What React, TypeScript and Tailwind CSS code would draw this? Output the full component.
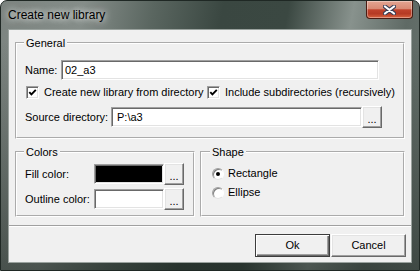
import React from 'react';

const sunken =
  'border border-t-[#a0a0a0] border-l-[#a0a0a0] border-r-white border-b-white shadow-[inset_1px_1px_0_#696969,inset_-1px_-1px_0_#e3e3e3]';
const raised =
  'border border-t-white border-l-white border-r-[#696969] border-b-[#696969] shadow-[inset_-1px_-1px_0_#a0a0a0,inset_1px_1px_0_#e3e3e3]';
const group = 'm-0 p-0 border-2 [border-style:groove] border-white';

const Checkbox = () => (
  <span className={`w-[13px] h-[13px] bg-white flex items-center justify-center ${sunken}`}>
    <svg width="9" height="9" viewBox="0 0 9 9">
      <path d="M1.3 4.2 L3.4 6.4 L7.8 1.8" stroke="#000" strokeWidth="1.9" fill="none" />
    </svg>
  </span>
);

const Radio = ({ on }: { on?: boolean }) => (
  <span className="w-[12px] h-[12px] rounded-full bg-white border border-t-[#a0a0a0] border-l-[#a0a0a0] border-r-white border-b-[#e3e3e3] shadow-[inset_1px_1px_0_#808080] flex items-center justify-center">
    {on && <span className="w-[4px] h-[4px] rounded-full bg-black" />}
  </span>
);

const Dots = ({ h = 'h-[22px]' }: { h?: string }) => (
  <button className={`w-[20px] ${h} bg-[#f0f0f0] ${raised} flex items-end justify-center pb-[4px] leading-[8px]`}>
    ...
  </button>
);

export default function App() {
  return (
    <div className="w-[420px] h-[271px] flex flex-col rounded-t-[7px] border border-[#1f2824] px-[7px] pb-[7px] font-['Liberation_Sans',Arial,sans-serif] text-[11px] leading-[13px] text-black bg-[linear-gradient(180deg,rgba(0,0,0,0)_0px,rgba(0,0,0,0)_40px,rgba(25,35,30,0.55)_100%),linear-gradient(100deg,#7c8480_0%,#858d89_18%,#5a6660_33%,#3a4741_48%,#3b4842_62%,#88928d_76%,#5f6a65_88%,#6e7873_100%)]">
      <div className="h-[28px] flex items-start justify-between -mx-[7px] pl-[7px] pr-[6px]">
        <span className="mt-[7px] text-[12px] leading-[15px] [text-shadow:0_0_6px_rgba(255,255,255,0.9),0_0_10px_rgba(255,255,255,0.6)]">
          Create new library
        </span>
        <div className="w-[47px] h-[18px] rounded-b-[4px] border border-t-0 border-[#4a1c12] shadow-[inset_0_0_0_1px_rgba(255,255,255,0.35)] bg-[linear-gradient(180deg,#e3a592_0%,#d88a74_45%,#c0432c_52%,#b53a24_75%,#d8643f_100%)] flex items-center justify-center">
          <svg width="13" height="10" viewBox="0 0 13 10">
            <path d="M2 1.5 L11 8.5 M11 1.5 L2 8.5" stroke="#3b3f55" strokeWidth="4.2" strokeLinecap="round" />
            <path d="M2 1.5 L11 8.5 M11 1.5 L2 8.5" stroke="#fff" strokeWidth="2.2" strokeLinecap="round" />
          </svg>
        </div>
      </div>

      <div className="h-[234px] bg-[#f0f0f0] border border-[#9aa29e] flex flex-col">
        <div className="pl-[6px] pr-[6px] pt-[7px]">
          <fieldset className={`h-[102px] ${group}`}>
            <legend className="ml-[7px] px-[2px] leading-[12px]">General</legend>
            <div className="pl-[8px]">
              <div className="mt-[11px] h-[20px] flex items-center">
                <span className="w-[36px]">Name:</span>
                <div className={`w-[318px] h-[20px] bg-white pl-[3px] flex items-center ${sunken}`}>02_a3</div>
              </div>
              <div className="mt-[6px] h-[13px] flex items-center">
                <div className="w-[181px] ml-[1px] flex items-center gap-[5px]">
                  <Checkbox />
                  <span>Create new library from directory</span>
                </div>
                <div className="flex items-center gap-[5px]">
                  <Checkbox />
                  <span>Include subdirectories (recursively)</span>
                </div>
              </div>
              <div className="mt-[7px] h-[22px] flex items-center">
                <span className="w-[86px]">Source directory:</span>
                <div className={`w-[251px] h-[20px] bg-white pl-[5px] flex items-center ${sunken}`}>P:\a3</div>
                <Dots />
              </div>
            </div>
          </fieldset>

          <div className="mt-[7px] flex gap-[5px]">
            <fieldset className={`w-[180px] h-[71px] ${group}`}>
              <legend className="ml-[7px] px-[2px] leading-[12px]">Colors</legend>
              <div className="pl-[8px]">
                <div className="mt-[5px] h-[22px] flex items-center">
                  <span className="w-[69px]">Fill color:</span>
                  <div className={`w-[70px] h-[20px] bg-black ${sunken}`} />
                  <Dots />
                </div>
                <div className="mt-[3px] h-[22px] flex items-center">
                  <span className="w-[69px]">Outline color:</span>
                  <div className={`w-[70px] h-[20px] bg-white ${sunken}`} />
                  <Dots />
                </div>
              </div>
            </fieldset>
            <fieldset className={`w-[205px] h-[71px] ${group}`}>
              <legend className="ml-[8px] px-[2px] leading-[12px]">Shape</legend>
              <div className="pl-[10px]">
                <div className="mt-[9px] h-[13px] flex items-center gap-[4px]">
                  <Radio on />
                  <span>Rectangle</span>
                </div>
                <div className="mt-[6px] h-[13px] flex items-center gap-[4px]">
                  <Radio />
                  <span>Ellipse</span>
                </div>
              </div>
            </fieldset>
          </div>
        </div>

        <div className="mt-[8px] h-[2px] border-t border-t-[#a0a0a0] border-b border-b-white" />

        <div className="mt-[7px] flex justify-end gap-[1px] pr-[5px]">
          <button className="w-[75px] h-[23px] bg-[#f0f0f0] border border-[#3c3c3c] shadow-[inset_1px_1px_0_#fff,inset_-1px_-1px_0_#696969,inset_-2px_-2px_0_#a0a0a0]">
            Ok
          </button>
          <button className={`w-[75px] h-[23px] bg-[#f0f0f0] ${raised}`}>Cancel</button>
        </div>
      </div>
    </div>
  );
}
